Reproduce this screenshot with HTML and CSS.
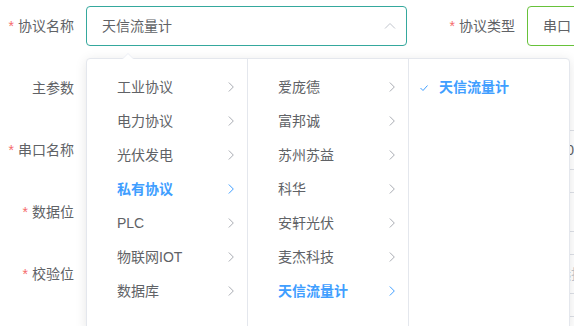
FILE: index.html
```html
<!DOCTYPE html>
<html lang="zh-CN">
<head>
  <meta charset="UTF-8">
  <meta name="viewport" content="width=device-width, initial-scale=1.0">
  <title>协议配置</title>
  <link rel="stylesheet" href="styles.css">
</head>
<body>
  <div class="form">
    <div class="row">
      <div class="item">
        <label class="label req">协议名称</label>
        <div class="input focus">
          <span>天信流量计</span>
          <svg class="caret" width="12" height="7" viewBox="0 0 12 7"><path d="M1 6.5l5-5 5 5" fill="none" stroke="#c0c4cc" stroke-width="1"/></svg>
        </div>
      </div>
      <div class="item item-right">
        <label class="label req">协议类型</label>
        <div class="input ok">串口</div>
      </div>
    </div>
    <div class="row">
      <div class="item">
        <label class="label">主参数</label>
        <div class="input"></div>
      </div>
    </div>
    <div class="row">
      <div class="item">
        <label class="label req">串口名称</label>
        <div class="input"></div>
      </div>
      <div class="item item-right">
        <label class="label req">波特率</label>
        <div class="input">9600</div>
      </div>
    </div>
    <div class="row">
      <div class="item">
        <label class="label req">数据位</label>
        <div class="input"></div>
      </div>
      <div class="item item-right">
        <label class="label req">停止位</label>
        <div class="input"></div>
      </div>
    </div>
    <div class="row">
      <div class="item">
        <label class="label req">校验位</label>
        <div class="input"></div>
      </div>
      <div class="item item-right">
        <label class="label">超时</label>
        <div class="input placeholder">请选择</div>
      </div>
    </div>
    <div class="row last-row">
      <div class="item">
        <label class="label"></label>
        <div class="input"></div>
      </div>
      <div class="item item-right">
        <label class="label"></label>
        <div class="input"></div>
      </div>
    </div>
  </div>

  <div class="popper">
    <div class="popper-arrow"></div>
    <div class="menu">
      <div class="node">工业协议<svg class="arrow" width="6" height="10" viewBox="0 0 6 10"><path d="M.8 .5l4.5 4.5-4.5 4.5" fill="none" stroke="currentColor"/></svg></div>
      <div class="node">电力协议<svg class="arrow" width="6" height="10" viewBox="0 0 6 10"><path d="M.8 .5l4.5 4.5-4.5 4.5" fill="none" stroke="currentColor"/></svg></div>
      <div class="node">光伏发电<svg class="arrow" width="6" height="10" viewBox="0 0 6 10"><path d="M.8 .5l4.5 4.5-4.5 4.5" fill="none" stroke="currentColor"/></svg></div>
      <div class="node active">私有协议<svg class="arrow" width="6" height="10" viewBox="0 0 6 10"><path d="M.8 .5l4.5 4.5-4.5 4.5" fill="none" stroke="currentColor"/></svg></div>
      <div class="node">PLC<svg class="arrow" width="6" height="10" viewBox="0 0 6 10"><path d="M.8 .5l4.5 4.5-4.5 4.5" fill="none" stroke="currentColor"/></svg></div>
      <div class="node">物联网IOT<svg class="arrow" width="6" height="10" viewBox="0 0 6 10"><path d="M.8 .5l4.5 4.5-4.5 4.5" fill="none" stroke="currentColor"/></svg></div>
      <div class="node">数据库<svg class="arrow" width="6" height="10" viewBox="0 0 6 10"><path d="M.8 .5l4.5 4.5-4.5 4.5" fill="none" stroke="currentColor"/></svg></div>
    </div>
    <div class="menu">
      <div class="node">爱庞德<svg class="arrow" width="6" height="10" viewBox="0 0 6 10"><path d="M.8 .5l4.5 4.5-4.5 4.5" fill="none" stroke="currentColor"/></svg></div>
      <div class="node">富邦诚<svg class="arrow" width="6" height="10" viewBox="0 0 6 10"><path d="M.8 .5l4.5 4.5-4.5 4.5" fill="none" stroke="currentColor"/></svg></div>
      <div class="node">苏州苏益<svg class="arrow" width="6" height="10" viewBox="0 0 6 10"><path d="M.8 .5l4.5 4.5-4.5 4.5" fill="none" stroke="currentColor"/></svg></div>
      <div class="node">科华<svg class="arrow" width="6" height="10" viewBox="0 0 6 10"><path d="M.8 .5l4.5 4.5-4.5 4.5" fill="none" stroke="currentColor"/></svg></div>
      <div class="node">安轩光伏<svg class="arrow" width="6" height="10" viewBox="0 0 6 10"><path d="M.8 .5l4.5 4.5-4.5 4.5" fill="none" stroke="currentColor"/></svg></div>
      <div class="node">麦杰科技<svg class="arrow" width="6" height="10" viewBox="0 0 6 10"><path d="M.8 .5l4.5 4.5-4.5 4.5" fill="none" stroke="currentColor"/></svg></div>
      <div class="node active">天信流量计<svg class="arrow" width="6" height="10" viewBox="0 0 6 10"><path d="M.8 .5l4.5 4.5-4.5 4.5" fill="none" stroke="currentColor"/></svg></div>
    </div>
    <div class="menu last">
      <div class="node active checked">
        <svg class="check" width="8" height="6" viewBox="0 0 8 6"><path d="M.5 3l2.5 2.5L7.5 .5" fill="none" stroke="currentColor"/></svg>天信流量计
      </div>
    </div>
  </div>
</body>
</html>
```

FILE: styles.css
```css
body {
  margin: 0;
  padding: 0;
  background-color: #fff;
  color: #606266;
  font-family: "Liberation Sans", "Noto Sans CJK SC", sans-serif;
  font-size: 14px;
  overflow: hidden;
  width: 574px;
  height: 326px;
  position: relative;
}
.form {
  padding-top: 6px;
}
.row {
  display: flex;
  margin-bottom: 22px;
  white-space: nowrap;
}
.last-row {
  height: 10px;
  overflow: hidden;
  margin-bottom: 0;
}
.item {
  display: flex;
  flex-shrink: 0;
}
.item-right {
  margin-left: 34px;
}
.label {
  width: 86px;
  box-sizing: border-box;
  padding-right: 12px;
  text-align: right;
  line-height: 40px;
  color: #606266;
}
.req::before {
  content: "*";
  color: #f56c6c;
  margin-right: 4px;
}
.input {
  width: 321px;
  height: 40px;
  box-sizing: border-box;
  border: 1px solid #dcdfe6;
  border-radius: 4px;
  padding: 0 15px;
  line-height: 38px;
  color: #606266;
  display: flex;
  align-items: center;
  justify-content: space-between;
  flex-shrink: 0;
}
.item-right .input {
  width: 180px;
}
.input.focus {
  border-color: #35a89d;
  padding-right: 10px;
}
.input.ok {
  border-color: #67c23a;
}
.input.placeholder {
  color: #c0c4cc;
}
.caret {
  display: block;
  margin-top: -1px;
}
.popper {
  position: absolute;
  left: 86px;
  top: 58px;
  display: flex;
  background-color: #fff;
  border: 1px solid #e4e7ed;
  border-radius: 4px;
  box-shadow: 0 2px 12px 0 rgba(0,0,0,0.1);
}
.popper-arrow {
  position: absolute;
  left: 35px;
  top: -6px;
  width: 0;
  height: 0;
  border: 6px solid transparent;
  border-top-width: 0;
  border-bottom-color: #ebeef5;
}
.popper-arrow::after {
  content: "";
  position: absolute;
  left: -6px;
  top: 1px;
  border: 6px solid transparent;
  border-top-width: 0;
  border-bottom-color: #fff;
}
.menu {
  width: 160px;
  height: 259px;
  box-sizing: content-box;
  padding: 11px 0 1px;
  border-right: 1px solid #e4e7ed;
  margin-bottom: -1px;
}
.menu.last {
  border-right: none;
}
.node {
  position: relative;
  height: 34px;
  line-height: 34px;
  padding: 0 13px 0 30px;
  display: flex;
  align-items: center;
  justify-content: space-between;
  color: #606266;
}
.node.active {
  color: #409eff;
  font-weight: bold;
}
.arrow {
  display: block;
  color: #a8abb2;
}
.node.active .arrow {
  color: #409eff;
}
.check {
  position: absolute;
  left: 11px;
  top: 15px;
  color: #409eff;
}
```
